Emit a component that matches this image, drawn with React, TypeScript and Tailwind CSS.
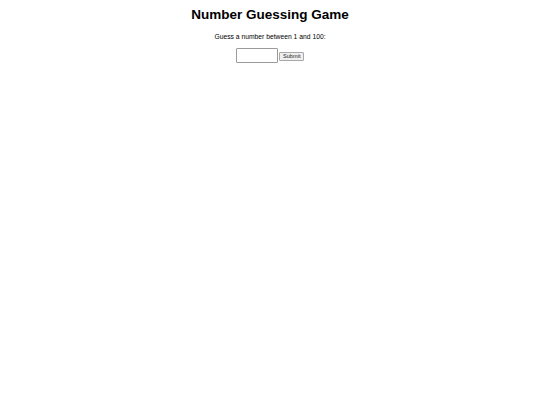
import { useState } from "react";

function App() {
  const [guess, setGuess] = useState("");

  return (
    <main className="min-h-screen bg-white text-black text-center pt-[7px] font-['Liberation_Sans',Arial,sans-serif]">
      <h1 className="text-[13.5px] leading-[15.5px] font-bold">Number Guessing Game</h1>

      <p className="mt-[10px] text-[6.75px] leading-[7.75px]">Guess a number between 1 and 100:</p>

      <div className="mt-[7.5px] flex items-start justify-center gap-[1.5px]">
        <input
          type="text"
          value={guess}
          onChange={(e) => setGuess(e.target.value)}
          className="w-[42px] h-[15px] border border-[#9a9a9a] rounded-[1px] bg-white outline-none"
        />
        <button className="mt-[4.5px] w-[25px] h-[9px] border border-[#a8a8a8] rounded-[1px] bg-[#efefef] text-[5.6px] leading-none text-[#222]">
          Submit
        </button>
      </div>
    </main>
  );
}

export default App;
